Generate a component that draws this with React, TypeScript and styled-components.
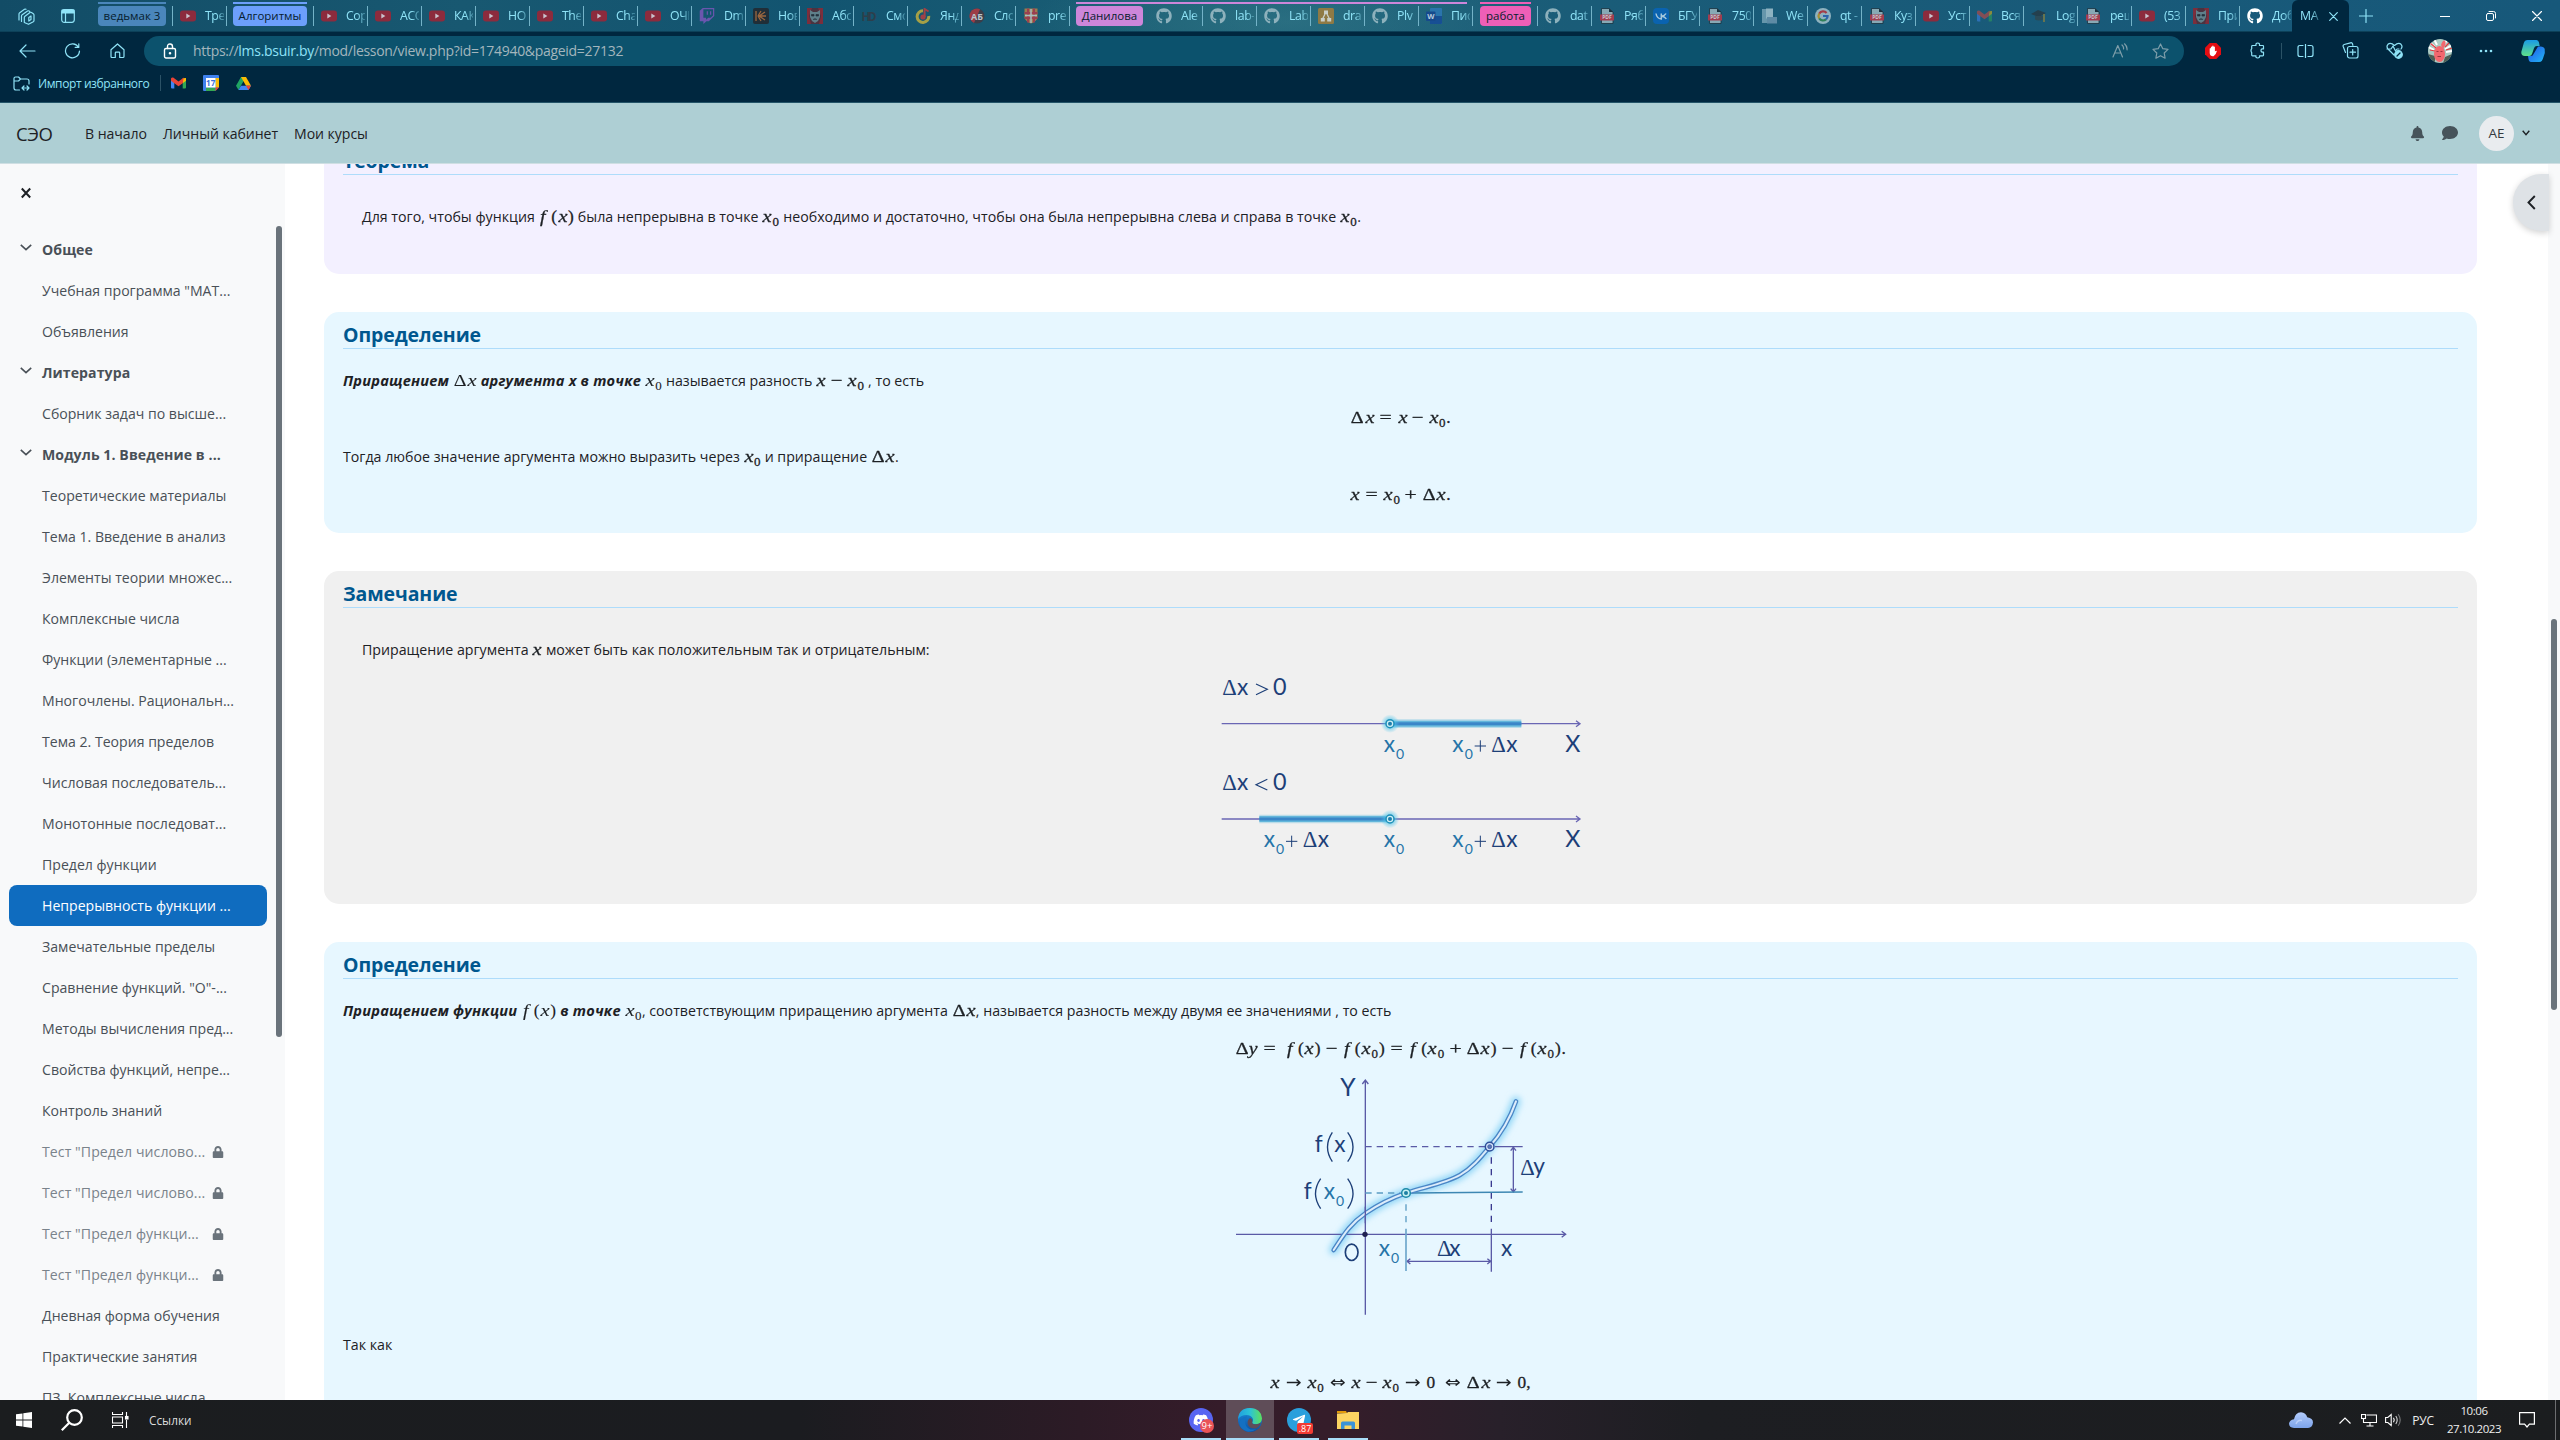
import React from "react";
import styled, { createGlobalStyle, css } from "styled-components";
import { FaGithub, FaBell, FaComment, FaLock, FaTwitch, FaDiscord, FaTelegramPlane } from "react-icons/fa";

const Global = createGlobalStyle`
  * { box-sizing: border-box; }
  html, body { margin: 0; padding: 0; }
  body { width: 2560px; height: 1440px; overflow: hidden; background: #fff; font-family: "Open Sans", "Noto Sans", sans-serif; }
  svg { display: block; flex: none; }
`;

const Screen = styled.div`
  width: 2560px;
  height: 1440px;
  display: flex;
  flex-direction: column;
  overflow: hidden;
`;

/* ---------- browser chrome ---------- */

const TabStrip = styled.div`
  height: 32px;
  flex: none;
  display: flex;
  align-items: stretch;
  padding-left: 10px;
  color: #8fe3f7;
  border-bottom: 1px solid #0d4159;
  background:
    radial-gradient(ellipse 260px 60px at 1290px 22px, rgba(70, 140, 150, 0.35), transparent),
    linear-gradient(90deg, #124c66 0%, #185871 18%, #125470 32%, #1b5f75 46%, #1a5c78 62%, #17587a 100%);
  background-color: #165670;
`;

const StripIcon = styled.div<{ $w: number }>`
  width: ${(p) => p.$w}px;
  display: flex;
  align-items: center;
  justify-content: center;
`;

const Group = styled.div<{ $w: number; $ml: number; $mr: number; $bg: string; $bar: number }>`
  width: ${(p) => p.$w}px;
  height: 20px;
  flex: none;
  margin: 6px ${(p) => p.$mr}px 0 ${(p) => p.$ml}px;
  border-radius: 4px;
  background: ${(p) => p.$bg};
  color: #07202e;
  font-size: 11.5px;
  line-height: 20px;
  text-align: center;
  white-space: nowrap;
  position: relative;
  &::before {
    content: "";
    position: absolute;
    left: 0;
    top: -4px;
    width: ${(p) => p.$bar}px;
    height: 2px;
    background: ${(p) => p.$bg};
  }
`;

const Tab = styled.div<{ $first?: boolean; $last?: boolean }>`
  width: 54px;
  flex: none;
  height: 20px;
  margin-top: 6px;
  padding-left: 7px;
  display: flex;
  align-items: center;
  gap: 9px;
  border-right: 1px solid ${(p) => (p.$last ? "transparent" : "#74b3c8")};
  ${(p) => p.$first && css`box-shadow: -1px 0 0 #74b3c8;`}
`;

const TabText = styled.div`
  width: 19px;
  overflow: hidden;
  white-space: nowrap;
  font-size: 12.3px;
  line-height: 18px;
  letter-spacing: -0.4px;
  mask-image: linear-gradient(90deg, #000 60%, rgba(0, 0, 0, 0.3));
`;

const ActiveTab = styled.div`
  width: 57px;
  height: 32px;
  flex: none;
  margin-left: -2px;
  padding: 0 11px 0 8px;
  display: flex;
  align-items: center;
  justify-content: space-between;
  background: #00273f;
  border-radius: 6px 6px 0 0;
`;

const WindowButtons = styled.div`
  margin-left: auto;
  width: 138px;
  display: flex;
  align-items: center;
  justify-content: space-around;
  color: #fff;
`;

const Toolbar = styled.div`
  height: 37px;
  flex: none;
  display: flex;
  align-items: center;
  background: #00273f;
  color: #8fe3f7;
`;

const ToolBtn = styled.div<{ $w?: number; $color?: string; $ml?: number }>`
  width: ${(p) => p.$w ?? 45}px;
  margin-left: ${(p) => p.$ml ?? 0}px;
  display: flex;
  justify-content: center;
  align-items: center;
  flex: none;
  color: ${(p) => p.$color ?? "inherit"};
`;

const Address = styled.div`
  width: 2040px;
  height: 30px;
  flex: none;
  border-radius: 15px;
  background: #0c526d;
  display: flex;
  align-items: center;
  padding: 0 8px 0 19px;
`;

const Url = styled.div`
  flex: 1;
  padding-left: 16px;
  font-size: 14px;
  letter-spacing: -0.3px;
  color: #a3b6bd;
  b { font-weight: 400; color: #8fe3f7; }
`;

const Divider = styled.div<{ $h?: number }>`
  width: 1px;
  height: ${(p) => p.$h ?? 16}px;
  background: #2b5266;
  flex: none;
`;

const Favorites = styled.div`
  height: 34px;
  flex: none;
  display: flex;
  align-items: center;
  padding: 0 0 5px 13px;
  background: #00273f;
  border-bottom: 1px solid #245468;
  color: #8fe3f7;
  font-size: 12px;
`;

const FavLabel = styled.div`
  width: 112px;
  margin: 0 10px 0 8px;
  white-space: nowrap;
  letter-spacing: -0.4px;
`;

const FavIcons = styled.div`
  display: flex;
  align-items: center;
  gap: 17px;
  margin-left: 10px;
`;

/* ---------- site header ---------- */

const SiteHeader = styled.header`
  height: 61px;
  flex: none;
  display: flex;
  align-items: center;
  padding: 0 30px 0 16px;
  background: #aecfd4;
  border-bottom: 1px solid #cfdfe3;
  color: #1d2125;
`;

const Brand = styled.div`
  width: 69px;
  font-size: 18.5px;
  letter-spacing: -0.4px;
`;

const NavLink = styled.div<{ $w: number }>`
  width: ${(p) => p.$w}px;
  font-size: 14.1px;
  letter-spacing: -0.05px;
  white-space: nowrap;
`;

const HeaderTools = styled.div`
  margin-left: auto;
  display: flex;
  align-items: center;
  gap: 17px;
  color: #46535a;
`;

const Avatar = styled.div`
  width: 35px;
  height: 35px;
  margin: 0 -9px 0 4px;
  border-radius: 50%;
  background: #e9ecef;
  color: #343a40;
  font-size: 13.5px;
  line-height: 35px;
  text-align: center;
`;

/* ---------- page body ---------- */

const Body = styled.div`
  flex: 1;
  min-height: 0;
  display: flex;
  overflow: hidden;
  position: relative;
`;

const Sidebar = styled.aside`
  width: 285px;
  flex: none;
  display: flex;
  flex-direction: column;
  background: #f8f9fa;
  overflow: hidden;
`;

const SidebarTop = styled.div`
  height: 62px;
  flex: none;
  padding: 23px 0 0 21px;
`;

const SidebarScroll = styled.div`
  display: flex;
  justify-content: space-between;
  padding-right: 3px;
`;

const IndexList = styled.div`
  width: 258px;
  margin: 3px 0 0 9px;
`;

const IndexRow = styled.div<{ $kind?: string }>`
  height: 41px;
  display: flex;
  align-items: center;
  border-radius: 8px;
  padding-left: 8px;
  white-space: nowrap;
  font-size: 14.1px;
  letter-spacing: 0;
  color: #495057;
  ${(p) => p.$kind === "head" && css`font-weight: 700; letter-spacing: 0.08px;`}
  ${(p) => p.$kind === "active" && css`background: #0f6cbf; color: #fff;`}
  ${(p) => p.$kind === "lock" && css`color: #7a838b; letter-spacing: 0.08px;`}
`;

const Caret = styled.div`
  width: 25px;
  padding: 0 0 4px 3px;
  flex: none;
`;

const RowText = styled.div<{ $w?: number }>`
  ${(p) => p.$w && css`width: ${p.$w}px;`}
`;

const SideThumb = styled.div`
  width: 6px;
  height: 811px;
  border-radius: 3px;
  background: #6a737b;
`;

const Main = styled.main`
  flex: 1;
  min-width: 0;
  display: flex;
  flex-direction: column;
  margin-top: -26px;
  padding: 0 71px 0 39px;
  overflow: hidden;
`;

const PageScroll = styled.div`
  width: 12px;
  flex: none;
  background: #f8f9fa;
  padding: 455px 3px 0;
`;

const PageThumb = styled.div`
  width: 6px;
  height: 391px;
  border-radius: 3px;
  background: #6a737b;
`;

const DrawerToggle = styled.div`
  position: absolute;
  right: 11px;
  top: 10px;
  width: 36px;
  height: 57px;
  border-radius: 28px 0 0 28px;
  background: #dee2e6;
  box-shadow: 0 2px 6px rgba(0, 0, 0, 0.18);
  display: flex;
  align-items: center;
  justify-content: center;
`;

const Card = styled.section<{ $bg: string; $h: number; $mb: number }>`
  height: ${(p) => p.$h}px;
  margin-bottom: ${(p) => p.$mb}px;
  flex: none;
  padding: 0 19px;
  border-radius: 15px;
  background: ${(p) => p.$bg};
  color: #1d2125;
  display: flex;
  flex-direction: column;
`;

const Title = styled.h4`
  margin: 0;
  height: 37px;
  flex: none;
  padding-top: 10px;
  font-size: 19.5px;
  line-height: 26px;
  font-weight: 700;
  letter-spacing: -0.1px;
  color: #00578f;
  border-bottom: 1px solid #aedcfb;
`;

const Para = styled.p<{ $mt: number; $indent?: boolean; $center?: boolean }>`
  margin: ${(p) => p.$mt}px 0 0;
  height: 24px;
  flex: none;
  line-height: 24px;
  font-size: 14.2px;
  letter-spacing: 0;
  white-space: nowrap;
  padding-left: ${(p) => (p.$indent ? 19 : 0)}px;
  text-align: ${(p) => (p.$center ? "center" : "left")};
`;

const Em = styled.b`
  font-style: italic;
  font-weight: 700;
  font-size: 14.6px;
  letter-spacing: 0.2px;
`;

const Figure = styled.div<{ $mt: number }>`
  margin-top: ${(p) => p.$mt}px;
  display: flex;
  justify-content: center;
`;

/* ---------- formulas ---------- */

const MathRun = styled.span<{ $bold?: boolean }>`
  font-family: "Liberation Serif", "Times New Roman", serif;
  font-size: 17.3px;
  letter-spacing: 0;
  line-height: 20px;
  -webkit-text-stroke: ${(p) => (p.$bold ? 0.3 : 0.1)}px currentColor;
`;

const Atom = styled.span<{ $w: number; $it?: boolean; $sx?: number; $m?: number; $sub?: boolean; $arrow?: boolean }>`
  display: inline-block;
  width: ${(p) => p.$w}em;
  margin: 0 ${(p) => p.$m ?? 0}em;
  text-align: center;
  line-height: 1;
  font-style: ${(p) => (p.$it ? "italic" : "normal")};
  transform: scaleX(${(p) => p.$sx ?? 1});
  ${(p) => p.$sub && css`font-size: 0.75em; vertical-align: -0.28em;`}
  ${(p) => p.$arrow && css`font-family: "DejaVu Sans", sans-serif; -webkit-text-stroke: 0;`}
`;

type Glyph = { c: string; w: number; it?: boolean; sx?: number; m?: number; sub?: boolean; arrow?: boolean };
const glyphs: Record<string, Glyph> = {
  x: { c: "x", w: 0.572, it: true, sx: 1.18 },
  y: { c: "y", w: 0.49, it: true, sx: 1.15 },
  f: { c: "f", w: 0.55, it: true, sx: 1.15 },
  D: { c: "Δ", w: 0.833, sx: 1.15 },
  "(": { c: "(", w: 0.389 },
  ")": { c: ")", w: 0.389 },
  "0": { c: "0", w: 0.5 },
  _0: { c: "0", w: 0.58, sub: true },
  "=": { c: "=", w: 0.778, m: 0.278, sx: 1.25 },
  "-": { c: "−", w: 0.778, m: 0.222, sx: 1.2 },
  "+": { c: "+", w: 0.778, m: 0.222, sx: 1.25 },
  ">": { c: "→", w: 1, m: 0.278, sx: 1.1, arrow: true },
  "<>": { c: "⇔", w: 1, m: 0.278, sx: 1.1, arrow: true },
  ".": { c: ".", w: 0.278 },
  ",": { c: ",", w: 0.278 },
  "~": { c: "", w: 0.167 },
  "~~": { c: "", w: 0.25 },
};

const M = ({ t, bold }: { t: string; bold?: boolean }) => (
  <MathRun $bold={bold}>
    {t.split(" ").map((k, i) => {
      const g = glyphs[k];
      return (
        <Atom key={i} $w={g.w} $it={g.it} $sx={g.sx} $m={g.m} $sub={g.sub} $arrow={g.arrow}>
          {g.c}
        </Atom>
      );
    })}
  </MathRun>
);

/* ---------- small icons ---------- */

const line = { fill: "none", stroke: "currentColor", strokeWidth: 1.2, strokeLinecap: "round" as const, strokeLinejoin: "round" as const };

const Yt = () => (
  <svg width="16" height="16" viewBox="0 0 16 16">
    <rect x="0" y="2.500" width="16" height="11" rx="3" fill="#8c2b3d" />
    <path d="M6.300 5.600v4.800L10.400 8z" fill="#c9c3cc" />
  </svg>
);
const Gh = ({ on }: { on?: boolean }) => <FaGithub size={16} color={on ? "#fff" : "#8db1bc"} />;
const Pdf = () => (
  <svg width="16" height="16" viewBox="0 0 16 16">
    <path d="M2.500 .5h7.500l4 3.500v11.500h-11.500z" fill="#87a9b5" stroke="#17303d" strokeWidth=".8" />
    <path d="M10 .5v3.500h4z" fill="#17303d" />
    <rect x="1" y="6.500" width="14" height="6" fill="#a23d50" />
    <text x="8" y="11.300" fontSize="5" fontWeight="700" textAnchor="middle" fill="#c9ccd4">PDF</text>
  </svg>
);
const GmailIcon = ({ o = 1 }: { o?: number }) => (
  <svg width="15" height="12" viewBox="0 0 15 12" opacity={o}>
    <path d="M0 1.500V10.500q0 1 1 1H3.300V5z" fill="#4285f4" />
    <path d="M15 1.500V10.500q0 1-1 1H11.700V5z" fill="#34a853" />
    <path d="M11.700 1.300L15 1v2.700l-3.300 2.500z" fill="#fbbc04" />
    <path d="M0 1.500Q.6 0 2.200.5L7.500 4.500 12.800.5l-1.100 5.700L7.500 9.300 3.300 6.200 0 3.700z" fill="#ea4335" />
  </svg>
);
const Face = () => (
  <svg width="16" height="16" viewBox="0 0 16 16">
    <rect width="16" height="16" fill="#4a3340" />
    <path d="M0 0h5L2 8l2 8H0zM16 0h-5l3 8-2 8h4z" fill="#7c2e3c" />
    <path d="M3 2l3 2h4l3-2v7l-2 4-3 2-3-2-2-4z" fill="#5f7f8a" />
    <path d="M4.500 6.500h2.500v1.500h-2.500zM9 6.500h2.500v1.500H9zM6 11.500q2-1.500 4 0" fill="#24313d" stroke="#24313d" strokeWidth=".7" />
  </svg>
);

const favicons: Record<string, React.ReactNode> = {
  yt: <Yt />,
  gh: <Gh />,
  ghOn: <Gh on />,
  pdf: <Pdf />,
  gmail: <GmailIcon o={0.5} />,
  face: <Face />,
  twitch: <FaTwitch size={16} color="#6a56ae" />,
  kc: (
    <svg width="16" height="16" viewBox="0 0 16 16">
      <rect width="16" height="16" rx="2" fill="#202e38" />
      <path d="M3 3v10M6 8h7M6 8l6-4M6 8l6 4M5 8l3-5M5 8l3 5" stroke="#9b673f" strokeWidth="1.300" />
    </svg>
  ),
  hd: (
    <svg width="16" height="16" viewBox="0 0 16 16">
      <text x="8" y="12.500" fontSize="11.500" fontWeight="700" textAnchor="middle" textLength="15" fill="#2d3f4b">HD</text>
    </svg>
  ),
  music: (
    <svg width="16" height="16" viewBox="0 0 16 16">
      <path d="M8 2.800A5.800 5.800 0 1 0 13.700 8" fill="none" stroke="#a5a046" strokeWidth="3" />
      <circle cx="8" cy="9" r="2.600" fill="#a04146" />
      <path d="M9.600 9V1l4 2.500" stroke="#a04146" strokeWidth="2" fill="none" />
    </svg>
  ),
  ab: (
    <svg width="16" height="16" viewBox="0 0 16 16">
      <circle cx="8" cy="8" r="7.500" fill="#3c3e4a" />
      <path d="M11 1.200A7.500 7.500 0 1 0 5 15z" fill="#9d3c46" />
      <text x="8" y="11.500" fontSize="9" fontWeight="700" textAnchor="middle" fill="#b8c3ca">AБ</text>
    </svg>
  ),
  shield: (
    <svg width="16" height="16" viewBox="0 0 16 16">
      <path d="M1.500.5h13v9q-1 4-6.500 6-5.500-2-6.500-6z" fill="#9e7a4e" />
      <path d="M5 .5v14M11 .5v14M1.500 5h13M1.500 10h13" stroke="#9b4050" strokeWidth="2" />
      <path d="M8 1v14M2 7.500h12" stroke="#a8bcc0" strokeWidth="1.500" />
    </svg>
  ),
  drawio: (
    <svg width="16" height="16" viewBox="0 0 16 16">
      <rect width="16" height="16" rx="1.500" fill="#8f7a45" />
      <path d="M8 4L4.500 11M8 4l3.500 7" stroke="#c9cfc9" strokeWidth="1.300" />
      <path d="M6 2.500h4v3.500H6zM2.800 10h4v3.500h-4zM9.200 10h4v3.500h-4z" fill="#c9cfc9" />
    </svg>
  ),
  word: (
    <svg width="16" height="16" viewBox="0 0 16 16">
      <rect x="4" y="0" width="12" height="16" rx="1" fill="#2a74ac" />
      <path d="M4 8h12v7q0 1-1 1H4z" fill="#174f94" />
      <rect x="0" y="3.500" width="9.500" height="9.500" rx="1" fill="#164a8c" />
      <text x="4.800" y="11" fontSize="7.500" fontWeight="700" textAnchor="middle" fill="#b5cbdc">W</text>
    </svg>
  ),
  vk: (
    <svg width="16" height="16" viewBox="0 0 16 16">
      <rect width="16" height="16" rx="4" fill="#0a63b0" />
      <path d="M3 5.500q.8 5 5.300 5.500V5.500M13 5.500Q11.800 7.800 8.500 8.200 12 8.700 13.300 11" fill="none" stroke="#a5c8dd" strokeWidth="1.500" />
    </svg>
  ),
  doc: (
    <svg width="16" height="16" viewBox="0 0 16 16">
      <path d="M1 1h8v14H1z" fill="#6696ab" />
      <path d="M5 .5h7v10H5z" fill="#8db2c1" />
      <path d="M6 9h10v6.500H6z" fill="#5e8ba5" />
    </svg>
  ),
  google: (
    <svg width="16" height="16" viewBox="0 0 16 16">
      <circle cx="8" cy="8" r="8" fill="#8fb2bf" />
      <g fill="none" strokeWidth="2.200">
        <path d="M11.600 5A4.600 4.600 0 0 0 4.200 5.600" stroke="#a33d48" />
        <path d="M4.200 5.600a4.600 4.600 0 0 0 0 4.800" stroke="#a58f35" />
        <path d="M4.200 10.400a4.600 4.600 0 0 0 6.800 1" stroke="#2f8159" />
        <path d="M8 8h4.600a4.600 4.600 0 0 1-1.600 3.400" stroke="#2b65ac" />
      </g>
    </svg>
  ),
  log: (
    <svg width="16" height="16" viewBox="0 0 16 16">
      <path d="M0 6l7-4 8 3-7 4z" fill="#24404e" />
      <path d="M4 8v3.500q4 2 8 0V8" fill="#2b4b58" />
      <path d="M13 6v8" stroke="#89803f" strokeWidth="1.400" />
    </svg>
  ),
};

type TabItem = [string, string];
const tabsA: TabItem[] = [["yt", "Тре"]];
const tabsB: TabItem[] = [
  ["yt", "Сор"], ["yt", "АСО"], ["yt", "КАК"], ["yt", "НО"], ["yt", "The"], ["yt", "Cha"], ["yt", "ОЧІ"],
  ["twitch", "Dm"], ["kc", "Нов"], ["face", "Абс"], ["hd", "Смо"], ["music", "Янд"], ["ab", "Сло"], ["shield", "pre"],
];
const tabsC: TabItem[] = [["gh", "Ale"], ["gh", "lab-"], ["gh", "Lab"], ["drawio", "dra"], ["gh", "Plv"], ["word", "Пис"]];
const tabsD: TabItem[] = [
  ["gh", "dat"], ["pdf", "Ряб"], ["vk", "БГУ"], ["pdf", "750"], ["doc", "We"], ["google", "qt -"], ["pdf", "Куз"],
  ["yt", "Уст"], ["gmail", "Вся"], ["log", "Log"], ["pdf", "реш"], ["yt", "(53"], ["face", "При"], ["ghOn", "Доб"],
];

const Tabs = ({ items, first, noLast }: { items: TabItem[]; first?: boolean; noLast?: boolean }) => (
  <>
    {items.map(([k, t], i) => (
      <Tab key={i} $first={first && i === 0} $last={noLast && i === items.length - 1}>
        {favicons[k]}
        <TabText>{t}</TabText>
      </Tab>
    ))}
  </>
);

const Chrome = () => (
  <>
    <TabStrip>
      <StripIcon $w={32}>
        <svg width="17" height="18" viewBox="0 0 17 18" {...line}>
          <path d="M1 13V7q0-.8.700-1.300L6.500 2.300q.7-.5 1.500 0M3.500 14.500V9q0-.8.7-1.300L9.500 4q.7-.5 1.500 0l.8.5" />
          <path d="M6.300 15.500v-5q0-.8.7-1.300l5-3.700q.7-.5 1.500 0l1.800 1.200q.7.500.7 1.300v5.500q0 .8-.7 1.200L10.500 17.300z" />
          <path d="M10.800 10.500l2.200-1.500v3.500l-2.200 1.500z" />
        </svg>
      </StripIcon>
      <StripIcon $w={52}>
        <svg width="14" height="14" viewBox="0 0 14 14" {...line}>
          <rect x=".7" y=".7" width="12.600" height="12.600" rx="2.500" />
          <path d="M1 1h12v3H1z" fill="currentColor" />
          <path d="M4.500 4v9" />
        </svg>
      </StripIcon>
      <Group $w={68} $ml={4} $mr={7} $bg="#4a86bb" $bar={68}>ведьмак 3</Group>
      <Tabs items={tabsA} first />
      <Group $w={74} $ml={6} $mr={7} $bg="#6c9ffb" $bar={74}>Алгоритмы</Group>
      <Tabs items={tabsB} first />
      <Group $w={67} $ml={6} $mr={6} $bg="#cd86da" $bar={391}>Данилова</Group>
      <Tabs items={tabsC} />
      <Group $w={51} $ml={7} $mr={7} $bg="#ee5fb7" $bar={51}>работа</Group>
      <Tabs items={tabsD} first noLast />
      <ActiveTab>
        <TabText>МА</TabText>
        <svg width="9" height="9" viewBox="0 0 9 9" {...line}><path d="M.7.7l7.600 7.600M8.300.7L.7 8.300" /></svg>
      </ActiveTab>
      <StripIcon $w={34}>
        <svg width="14" height="14" viewBox="0 0 14 14" {...line}><path d="M7 .5v13M.5 7h13" /></svg>
      </StripIcon>
      <WindowButtons>
        <svg width="10" height="10" viewBox="0 0 10 10" {...line}><path d="M.5 5.500h9" /></svg>
        <svg width="10" height="10" viewBox="0 0 10 10" {...line} strokeWidth={1}>
          <rect x=".5" y="2.500" width="7" height="7" rx="1.500" /><path d="M3 .5h4.500q2 0 2 2V7" />
        </svg>
        <svg width="10" height="10" viewBox="0 0 10 10" {...line}><path d="M.5.5l9 9M9.500.5l-9 9" /></svg>
      </WindowButtons>
    </TabStrip>
    <Toolbar>
      <ToolBtn $w={54}>
        <svg width="17" height="14" viewBox="0 0 17 14" {...line}><path d="M16 7H1M7 1L1 7l6 6" /></svg>
      </ToolBtn>
      <ToolBtn $w={36}>
        <svg width="17" height="16" viewBox="0 0 17 16" {...line}><path d="M14.500 4.200A7 7 0 1 0 15.500 8M14.800.8v3.600h-3.600" /></svg>
      </ToolBtn>
      <ToolBtn $w={54}>
        <svg width="15" height="16" viewBox="0 0 15 16" {...line}><path d="M1 6.800L7.500 1 14 6.800V13.500q0 1-1 1H9.700V10q0-.8-.8-.8H6.100q-.8 0-.8.8v4.500H2q-1 0-1-1z" /></svg>
      </ToolBtn>
      <Address>
        <svg width="14" height="16" viewBox="0 0 14 16" {...line} stroke="#fff" strokeWidth={1.4}>
          <rect x="1.500" y="5.500" width="11" height="9.500" rx="1.500" /><path d="M4.500 5.500V3.500q0-2.500 2.500-2.500t2.500 2.500v2" /><circle cx="7" cy="10.200" r=".6" fill="#fff" />
        </svg>
        <Url>https://<b>lms.bsuir.by</b>/mod/lesson/view.php?id=174940&amp;pageid=27132</Url>
        <ToolBtn $w={24} $color="#7e9eaa">
          <svg width="16" height="15" viewBox="0 0 16 15" {...line}><path d="M1 14L5.800 2.500 10.500 14M2.700 10h6.200M10 2q2 1.800 1.500 4M12.500.8q3 2.700 2.500 6" /></svg>
        </ToolBtn>
        <ToolBtn $w={32} $ml={12} $color="#7e9eaa">
          <svg width="17" height="16" viewBox="0 0 17 16" {...line}><path d="M8.500 1l2.300 4.700 5.200.7-3.800 3.600.9 5.200-4.600-2.500-4.600 2.500.9-5.200L1 6.400l5.200-.7z" /></svg>
        </ToolBtn>
      </Address>
      <ToolBtn $w={57}>
        <svg width="16" height="16" viewBox="0 0 16 16">
          <path d="M4.700 0h6.600L16 4.700v6.600L11.300 16H4.700L0 11.300V4.700z" fill="#e40d12" />
          <path d="M4.700 5.500q.8-1 1.200 0V4q.7-1 1.300 0V3q.8-1 1.400 0v1q.7-1 1.300 0v4.500q1-1.300 2-.5-.9 4-3.400 5.300-3.500.3-3.800-3.300z" fill="#fff" />
        </svg>
      </ToolBtn>
      <ToolBtn $w={32}>
        <svg width="15" height="17" viewBox="0 0 15 17" {...line}><path d="M2.500 3.500H6Q5.500 1 7.700 1t1.800 2.500h3.300q.7 0 .7.700V7Q11 6.500 11 8.500t2.500 1.500v3q0 .8-.7.800H9.500Q10 16 7.700 16T6 13.800H2.500q-.8 0-.8-.8v-2.500Q1 10 1 8.500T1.700 6.800V4.300q0-.8.8-.8z" /></svg>
      </ToolBtn>
      <ToolBtn $w={16}><Divider $h={16} /></ToolBtn>
      <ToolBtn $w={33}>
        <svg width="17" height="14" viewBox="0 0 17 14" {...line}><path d="M8.500 0v14M6 1.500H3q-2 0-2 2v7q0 2 2 2h3M11 1.500h3q2 0 2 2v7q0 2-2 2h-3" /></svg>
      </ToolBtn>
      <ToolBtn $w={56}>
        <svg width="17" height="17" viewBox="0 0 17 17" {...line}><path d="M3.500 10.500L1.200 4.500q-.5-1.500 1-2L8.500.8q1.500-.4 2 1l.4 1.500" /><rect x="5.500" y="4.500" width="10.500" height="11.500" rx="2" /><path d="M10.700 7.500v5.500M8 10.200h5.500" /></svg>
      </ToolBtn>
      <ToolBtn $w={32}>
        <svg width="17" height="17" viewBox="0 0 17 17" {...line}>
          <path d="M8 13L2 7Q0 4.500 2 2.300 4.500 0 8.500 3.500 12.500 0 15 2.300 17 4.500 15 7M1 7h4l2-3 2.500 5L11 7h2" /><circle cx="12.500" cy="12.500" r="3.800" fill="currentColor" /><path d="M11 14l3-3" stroke="#00273f" />
        </svg>
      </ToolBtn>
      <ToolBtn $w={60}>
        <svg width="24" height="24" viewBox="0 0 24 24">
          <defs><clipPath id="av"><circle cx="12" cy="12" r="12" /></clipPath></defs>
          <g clipPath="url(#av)">
            <rect width="24" height="24" fill="#a9c9c2" />
            <path d="M0 2l7 6M0 8l6 3M6 0l3 6M20 0l-5 6M24 6l-7 4M24 12l-6 1" stroke="#fff" strokeWidth="2" />
            <path d="M2 4l6 5M2 11l5 1M22 3l-5 5M24 9l-6 2" stroke="#e3393f" strokeWidth="1.200" />
            <path d="M0 15l7 2v7H0zM24 15l-7 3-2 6h9z" fill="#4d5f56" />
            <ellipse cx="11.500" cy="15" rx="5.500" ry="8" fill="#f2676e" />
            <path d="M13 6q2-6 4-4t-2 8z" fill="#f2676e" />
            <path d="M8.500 12.500h2M12.500 12.500h2M9.500 17.500h3.500" stroke="#9c3540" />
          </g>
        </svg>
      </ToolBtn>
      <ToolBtn $w={32}>
        <svg width="14" height="4" viewBox="0 0 14 4" fill="currentColor"><circle cx="2" cy="2" r="1.300" /><circle cx="7" cy="2" r="1.300" /><circle cx="12" cy="2" r="1.300" /></svg>
      </ToolBtn>
      <ToolBtn $w={62}>
        <svg width="24" height="22" viewBox="0 0 24 22">
          <defs>
            <linearGradient id="cpA" x1="0" y1="0" x2="0" y2="1"><stop offset="0" stopColor="#1a9ae6" /><stop offset="1" stopColor="#5fe08a" /></linearGradient>
            <linearGradient id="cpB" x1="0" y1="0" x2="1" y2="1"><stop offset="0" stopColor="#2452e8" /><stop offset="1" stopColor="#21b8f5" /></linearGradient>
          </defs>
          <path d="M17 6.500h2.500Q23 6.500 23.700 9l.1 4-2 6q-.8 3-3.800 3h-8Q8 22 7.500 19l-.5-3h3q2 0 2.700-2.200z" fill="url(#cpB)" />
          <path d="M6.500 0h9Q17.500 0 18 2.500L18.700 6h-3q-2 0-2.700 2.200L11 14q-.7 2-2.700 2H4Q0 16 .3 12L2.800 3Q3.700 0 6.500 0z" fill="url(#cpA)" />
        </svg>
      </ToolBtn>
    </Toolbar>
    <Favorites>
      <svg width="17" height="15" viewBox="0 0 17 15" {...line}>
        <path d="M6.500 14H3q-2 0-2-2V2.500Q1 1 2.500 1h3L7.500 3H14q2 0 2 2v3M1 5h4.500l2-2M9 12h7M11 10l-2 2 2 2M14 10l2 2-2 2" />
      </svg>
      <FavLabel>Импорт избранного</FavLabel>
      <Divider />
      <FavIcons>
        <GmailIcon />
        <svg width="16" height="16" viewBox="0 0 16 16">
          <path d="M1 0h14q1 0 1 1v11l-4 4H1q-1 0-1-1V1q0-1 1-1z" fill="#3f82ee" />
          <path d="M12.500 3H16v9.500h-3.500z" fill="#fbbc04" /><path d="M3 12.500h9.500V16H3z" fill="#34a853" /><path d="M12.500 12.500H16L12.500 16z" fill="#ea4335" />
          <path d="M3 3h9.500v9.500H3z" fill="#fff" />
          <text x="7.700" y="11" fontSize="8" fontWeight="700" textAnchor="middle" fill="#3a72d8">17</text>
        </svg>
        <svg width="15" height="13" viewBox="0 0 15 13">
          <path d="M5 0h5L5 8.500 2.500 13 0 8.700z" fill="#1fa463" /><path d="M5 0h5l5 8.700h-5z" fill="#fbbc04" /><path d="M5 8.700h10L12.500 13h-10z" fill="#4285f4" /><path d="M10 8.700h5L12.500 13z" fill="#ea4335" />
        </svg>
      </FavIcons>
    </Favorites>
  </>
);

/* ---------- sidebar data ---------- */

const rows: { t: string; k?: string }[] = [
  { t: "Общее", k: "head" },
  { t: "Учебная программа \"МАТ..." },
  { t: "Объявления" },
  { t: "Литература", k: "head" },
  { t: "Сборник задач по высше..." },
  { t: "Модуль 1. Введение в ...", k: "head" },
  { t: "Теоретические материалы" },
  { t: "Тема 1. Введение в анализ" },
  { t: "Элементы теории множес..." },
  { t: "Комплексные числа" },
  { t: "Функции (элементарные ..." },
  { t: "Многочлены. Рациональн..." },
  { t: "Тема 2. Теория пределов" },
  { t: "Числовая последователь..." },
  { t: "Монотонные последоват..." },
  { t: "Предел функции" },
  { t: "Непрерывность функции ...", k: "active" },
  { t: "Замечательные пределы" },
  { t: "Сравнение функций. \"О\"-..." },
  { t: "Методы вычисления пред..." },
  { t: "Свойства функций, непре..." },
  { t: "Контроль знаний" },
  { t: "Тест \"Предел числово...", k: "lock" },
  { t: "Тест \"Предел числово...", k: "lock" },
  { t: "Тест \"Предел функци...", k: "lock" },
  { t: "Тест \"Предел функци...", k: "lock" },
  { t: "Дневная форма обучения" },
  { t: "Практические занятия" },
  { t: "ПЗ. Комплексные числа" },
];

/* ---------- figures ---------- */

const navy = "#1d3f78";
const teal = "#2674a8";
const axis = "#5a5aa6";

const FigText = styled.text<{ $s: number; $c?: string }>`
  font-family: Lato, sans-serif;
  font-size: ${(p) => p.$s}px;
  fill: ${(p) => p.$c ?? navy};
`;

const Delta = styled.text`
  font-family: "Liberation Serif", serif;
  font-size: 68px;
  fill: ${navy};
`;

const X0 = ({ x, y }: { x: number; y: number }) => (
  <>
    <FigText $s={68} $c={teal} x={x - 1} y={y}>x</FigText>
    <FigText $s={42} $c={teal} x={x + 36} y={y + 21}>0</FigText>
  </>
);
const X0D = ({ x, y }: { x: number; y: number }) => (
  <>
    <X0 x={x} y={y} />
    <path d={`M${x + 66} ${y - 17}h34M${x + 83} ${y - 34}v34`} stroke={navy} strokeWidth="3" />
    <Delta x={x + 116} y={y}>Δ</Delta>
    <FigText $s={68} x={x + 161} y={y}>x</FigText>
  </>
);

const AxisRow = ({ y, from, to, sign }: { y: number; from: number; to: number; sign: string }) => (
  <>
    <Delta x={127} y={y - 86}>Δ</Delta>
    <FigText $s={68} x={171} y={y - 86}>x</FigText>
    <path d={sign} transform={`translate(226 ${y - 131})`} fill="none" stroke={navy} strokeWidth="3.5" />
    <FigText $s={70} x={279} y={y - 86}>0</FigText>
    <path d={`M125 ${y}H1198M1188 ${y - 9}l12 9-12 9`} fill="none" stroke="#6a66b4" strokeWidth="4" />
    <path d={`M${from} ${y}H${to}`} stroke="#3fb0da" strokeWidth="26" opacity=".3" />
    <path d={`M${from} ${y}H${to}`} stroke="#3fa6d6" strokeWidth="18" opacity=".7" />
    <path d={`M${from} ${y}H${to}`} stroke="#3b86c8" strokeWidth="9" />
    <circle cx="630" cy={y} r="28" fill="url(#glow)" />
    <circle cx="630" cy={y} r="12" fill="#cfeff5" stroke="#1d8fb8" strokeWidth="4.500" />
    <circle cx="630" cy={y} r="6" fill="#1b7fae" />
    <X0 x={612} y={y + 84} />
    <X0D x={818} y={y + 84} />
    <FigText $s={70} x={1156} y={y + 84}>X</FigText>
  </>
);

const NumberLines = () => (
  <svg width="440" height="200" viewBox="3 90 1320 600">
    <defs>
      <radialGradient id="glow"><stop offset=".4" stopColor="#4cc4ea" stopOpacity=".7" /><stop offset="1" stopColor="#4cc4ea" stopOpacity="0" /></radialGradient>
    </defs>
    <AxisRow y={251} from={640} to={1024} sign="M2 12l34 16-34 16" />
    <AxisRow y={537} from={238} to={620} sign="M36 12L2 28l34 16" />
    <X0D x={252} y={621} />
  </svg>
);

const curve = "M401 690C425 655 445 615 496 580C540 550 580 532 618 519C690 497 740 488 780 465C815 445 840 415 869 380C900 345 930 295 948 244";

const Graph = () => (
  <svg width="400" height="255" viewBox="3 150 1200 765">
    <defs><filter id="soft" x="-20%" y="-20%" width="140%" height="140%"><feGaussianBlur stdDeviation="10" /></filter></defs>
    <path d={curve} fill="none" stroke="#8fd5f6" strokeWidth="28" strokeLinecap="round" filter="url(#soft)" />
    <g fill="none" stroke={axis} strokeWidth="4">
      <path d="M108 643H1096M1085 634l12 9-12 9M496 884V180M487 192l9-12 9 12" />
      <path d="M496 380H855" strokeDasharray="19 15" />
      <path d="M874 412V620" stroke="#3a3a90" strokeDasharray="19 16" />
      <path d="M874 626V755M885 380H968M940 384v130M932 392l8-10 8 10M932 506l8 10 8-10M622 724H870M631 716l-10 8 10 8M862 716l10 8-10 8" />
      <path d="M496 519H600" stroke="#5b9cc4" strokeDasharray="19 15" />
      <path d="M618 553V620" stroke="#5b9cc4" strokeDasharray="19 16" />
      <path d="M618 626V753" stroke="#6da6cc" strokeWidth="5" />
      <path d="M634 519L968 516" stroke="#3d87b3" />
    </g>
    <path d={curve} fill="none" stroke="#4a86c6" strokeWidth="14" strokeLinecap="round" />
    <path d={curve} fill="none" stroke="#dcecfb" strokeWidth="6" strokeLinecap="round" />
    <path d="M496 560V610" stroke={axis} strokeWidth="4" />
    <circle cx="618" cy="519" r="13" fill="#c6f0f2" stroke="#1d8aa8" strokeWidth="4.500" />
    <circle cx="618" cy="519" r="6" fill="#1d7fa3" />
    <circle cx="869" cy="380" r="13" fill="#d5e4fa" stroke="#2d4f9a" strokeWidth="4.500" />
    <circle cx="869" cy="380" r="6" fill="#5c78b8" stroke="#2d4f9a" strokeWidth="2" />
    <circle cx="495" cy="643" r="8" fill="#1f2050" />
    <FigText $s={74} x={421} y={229}>Y</FigText>
    <FigText $s={68} x={344} y={397}>f</FigText>
    <FigText $s={68} x={403} y={397}>x</FigText>
    <FigText $s={68} x={311} y={537}>f</FigText>
    <X0 x={372} y={536} />
    <g fill="none" stroke={navy} strokeWidth="4">
      <path d="M397 337q-29 44 0 88M443 337q32 44 0 88M362 476q-31 45 0 90M443 476q32 45 0 90" />
    </g>
    <ellipse cx="455" cy="697" rx="19" ry="24.500" fill="none" stroke={navy} strokeWidth="5" />
    <X0 x={537} y={709} />
    <Delta x={711} y={707}>Δ</Delta>
    <FigText $s={68} x={748} y={707}>x</FigText>
    <FigText $s={68} x={903} y={708}>x</FigText>
    <Delta x={961} y={465}>Δ</Delta>
    <FigText $s={68} x={1000} y={463}>y</FigText>
  </svg>
);

/* ---------- taskbar ---------- */

const Taskbar = styled.footer`
  height: 40px;
  flex: none;
  display: flex;
  align-items: stretch;
  color: #fff;
  background: linear-gradient(90deg, #1b1d1f 0, #1b1c20 800px, #2c1b26 1080px, #351c2a 1220px, #351d2a 1340px, #28202a 1500px, #1d1e22 1700px, #1b1d1f 100%);
`;

const StartArea = styled.div`
  width: 1181px;
  display: flex;
  align-items: center;
  padding-left: 16px;
  font-size: 11.8px;
  color: #dcdcdc;
`;

const StartIcon = styled.div<{ $mr: number }>`
  margin-right: ${(p) => p.$mr}px;
`;

const Apps = styled.div`
  display: flex;
`;

const AppButton = styled.div<{ $w: number; $mr: number; $on?: boolean }>`
  width: ${(p) => p.$w}px;
  margin-right: ${(p) => p.$mr}px;
  display: flex;
  align-items: center;
  justify-content: center;
  border-bottom: 2px solid #a9ddf8;
  padding-top: 2px;
  background: ${(p) => (p.$on ? "#5f4d58" : "transparent")};
  position: relative;
`;

const Disc = styled.div<{ $bg: string }>`
  width: 24px;
  height: 24px;
  border-radius: 50%;
  background: ${(p) => p.$bg};
  display: flex;
  align-items: center;
  justify-content: center;
`;

const Badge = styled.span<{ $sq?: boolean }>`
  position: absolute;
  left: ${(p) => (p.$sq ? 18 : 19)}px;
  top: ${(p) => (p.$sq ? 23 : 19)}px;
  width: ${(p) => (p.$sq ? 16 : 14)}px;
  height: ${(p) => (p.$sq ? 11 : 14)}px;
  border-radius: ${(p) => (p.$sq ? 2 : 7)}px;
  background: ${(p) => (p.$sq ? "#f23b34" : "#ea5357")};
  color: #fff;
  font-size: ${(p) => (p.$sq ? 9 : 9.5)}px;
  line-height: ${(p) => (p.$sq ? 11 : 13)}px;
  text-align: center;
`;

const Tray = styled.div`
  margin-left: auto;
  width: 271px;
  display: flex;
  align-items: center;
  color: #eee;
`;

const TrayItem = styled.div<{ $w: number; $ml?: number }>`
  width: ${(p) => p.$w}px;
  margin-left: ${(p) => p.$ml ?? 0}px;
  flex: none;
  display: flex;
  justify-content: center;
  font-size: 12px;
  letter-spacing: -0.2px;
`;

const Clock = styled.div`
  width: 62px;
  flex: none;
  margin-left: 6px;
  text-align: center;
  font-size: 11.5px;
  line-height: 18px;
  letter-spacing: -0.45px;
  white-space: nowrap;
`;

const ShowDesktop = styled.div`
  width: 5px;
  height: 40px;
  margin-left: auto;
  border-left: 1px solid #6d6e70;
`;

const Bottom = () => (
  <Taskbar>
    <StartArea>
      <StartIcon $mr={29}>
        <svg width="16" height="16" viewBox="0 0 16 16" fill="#fff"><path d="M0 2.300L6.500 1.400v6.200H0zM7.300 1.300L16 0v7.600H7.300zM0 8.400h6.500v6.200L0 13.700zM7.300 8.400H16V16L7.300 14.700z" /></svg>
      </StartIcon>
      <StartIcon $mr={29}>
        <svg width="22" height="22" viewBox="0 0 22 22" fill="none" stroke="#fff" strokeWidth="2.200"><circle cx="13.500" cy="8.500" r="7.300" /><path d="M8.300 13.700L.8 21.200" /></svg>
      </StartIcon>
      <StartIcon $mr={20}>
        <svg width="17" height="16" viewBox="0 0 17 16" fill="none" stroke="#fff" strokeWidth="1.100"><path d="M.5 0v2.500h10V0M.5 16v-2.500h10V16M.5 5h10v6H.5zM14.500 0v4M14.500 8v8" /><rect x="13.500" y="4.500" width="2.500" height="2.500" fill="#fff" /></svg>
      </StartIcon>
      Ссылки
    </StartArea>
    <Apps>
      <AppButton $w={40} $mr={5}><Disc $bg="#5865f2"><FaDiscord size={16} /></Disc><Badge>9+</Badge></AppButton>
      <AppButton $w={48} $mr={5} $on>
        <svg width="24" height="24" viewBox="0 0 24 24">
          <defs>
            <linearGradient id="e1" x1="0" y1="0" x2="1" y2="0"><stop offset="0" stopColor="#1f9fe0" /><stop offset=".5" stopColor="#2cc3d6" /><stop offset="1" stopColor="#5fe05a" /></linearGradient>
            <linearGradient id="e2" x1="0" y1="0" x2="0" y2="1"><stop offset="0" stopColor="#1d8fdb" /><stop offset="1" stopColor="#0a4fa5" /></linearGradient>
          </defs>
          <circle cx="12" cy="12" r="12" fill="url(#e2)" />
          <path d="M0 11Q1 0 12 0T24 10.500Q23.500 16 18 16.200 14 16 14.200 14.500 16 12.500 14.500 10 12.500 7 8.500 7 3 7 0 11z" fill="url(#e1)" />
          <path d="M14.200 14.500Q14 16.500 18 16.200 21 16 23 14.500 21.500 19 18 20.500 12 21 10 17 8.500 12.500 12 10 15 11 14.200 14.500z" fill="#5f4d58" />
          <path d="M9 8.500Q5.500 13 8.500 18.500 11.500 23 18.500 21 14 24.500 9 23.500 0 20 2 13 4 9 9 8.500z" fill="#1470c2" />
        </svg>
      </AppButton>
      <AppButton $w={40} $mr={9}><Disc $bg="#2a9fdc"><FaTelegramPlane size={14} /></Disc><Badge $sq>.87</Badge></AppButton>
      <AppButton $w={40} $mr={0}>
        <svg width="22" height="18" viewBox="0 0 22 18">
          <path d="M0 0h9l1 2H0z" fill="#e19a0b" /><path d="M0 2.500L10 2l1-1h11v17H0z" fill="#fcd462" /><path d="M4 18v-6q0-1.500 1.500-1.500h11q1.500 0 1.500 1.500v6h-3.500v-3.500h-7V18z" fill="#3b93d8" />
        </svg>
      </AppButton>
    </Apps>
    <Tray>
      <TrayItem $w={24}>
        <svg width="24" height="16" viewBox="0 0 24 16">
          <defs><linearGradient id="cl" x1="0" y1="0" x2="0" y2="1"><stop offset="0" stopColor="#b4ccfb" /><stop offset="1" stopColor="#7ca3ea" /></linearGradient></defs>
          <path d="M5 16Q0 15.500 0 11.500 .5 8 5 7.300 6 .5 12 .2q5 .3 6.200 5Q24 6 24 10.500 23.500 15.500 19 16z" fill="url(#cl)" />
          <path d="M7 12Q9 7.500 13 8.500" stroke="#d6e3ff" strokeWidth="1.500" fill="none" opacity=".6" />
        </svg>
      </TrayItem>
      <TrayItem $w={32} $ml={16}><svg width="12" height="7" viewBox="0 0 12 7" fill="none" stroke="#fff" strokeWidth="1.200"><path d="M.5 6.500L6 1l5.500 5.500" /></svg></TrayItem>
      <TrayItem $w={16}>
        <svg width="16" height="13" viewBox="0 0 16 13" fill="none" stroke="#fff" strokeWidth="1.100"><path d="M5.500 1h10v7.500H2.500V5M9 8.500V12M5.500 12h7" /><rect x=".5" y=".5" width="4" height="4" /></svg>
      </TrayItem>
      <TrayItem $w={32}>
        <svg width="17" height="14" viewBox="0 0 17 14" fill="none" stroke="#fff" strokeWidth="1.100"><path d="M.6 4.500h2.200L6.200 1.500v11L2.800 9.500H.6zM8.500 4.800q1.500 2.200 0 4.400" /><path d="M10.800 3q2.800 4 0 8" opacity=".8" /><path d="M13.200 1.300q4 5.700 0 11.400" opacity=".4" /></svg>
      </TrayItem>
      <TrayItem $w={28}>РУС</TrayItem>
      <Clock>10:06<br />27.10.2023</Clock>
      <TrayItem $w={16} $ml={14}>
        <svg width="16" height="16" viewBox="0 0 16 16" fill="none" stroke="#fff" strokeWidth="1.200"><path d="M.6.6h14.800v11.600h-5L8 15l-2.400-2.800h-5z" /></svg>
      </TrayItem>
      <ShowDesktop />
    </Tray>
  </Taskbar>
);

export default function App() {
  return (
    <>
      <Global />
      <Screen>
        <Chrome />
        <SiteHeader>
          <Brand>СЭО</Brand>
          <NavLink $w={78}>В начало</NavLink>
          <NavLink $w={131}>Личный кабинет</NavLink>
          <NavLink $w={90}>Мои курсы</NavLink>
          <HeaderTools>
            <FaBell size={15} />
            <FaComment size={16} />
            <Avatar>АЕ</Avatar>
            <svg width="8" height="6" viewBox="0 0 8 6" fill="none" stroke="#1d2125" strokeWidth="1.400"><path d="M.7.8L4 4.600 7.300.8" /></svg>
          </HeaderTools>
        </SiteHeader>
        <Body>
          <Sidebar>
            <SidebarTop>
              <svg width="10" height="12" viewBox="0 0 10 12" fill="none" stroke="#1d2125" strokeWidth="2"><path d="M.8 1.500l8.400 9M9.200 1.500l-8.400 9" /></svg>
            </SidebarTop>
            <SidebarScroll>
              <IndexList>
                {rows.map((r, i) => (
                  <IndexRow key={i} $kind={r.k}>
                    <Caret>
                      {r.k === "head" && (
                        <svg width="12" height="7" viewBox="0 0 12 7" fill="none" stroke="#495057" strokeWidth="1.600"><path d="M.8.8L6 5.600 11.200.8" /></svg>
                      )}
                    </Caret>
                    <RowText $w={r.k === "lock" ? 170 : undefined}>{r.t}</RowText>
                    {r.k === "lock" && <FaLock size={12} color="#6a737b" />}
                  </IndexRow>
                ))}
              </IndexList>
              <SideThumb />
            </SidebarScroll>
          </Sidebar>
          <Main>
            <Card $bg="#f3f0ff" $h={136} $mb={38}>
              <Title>Теорема</Title>
              <Para $mt={30} $indent>
                Для того, чтобы функция <M bold t="f ~ ( x )" /> была непрерывна в точке <M bold t="x _0" /> необходимо и достаточно, чтобы она была непрерывна слева и справа в точке <M bold t="x _0" />.
              </Para>
            </Card>
            <Card $bg="#e7f7ff" $h={221} $mb={38}>
              <Title>Определение</Title>
              <Para $mt={19}>
                <Em>Приращением</Em> <M t="D x" /> <Em>аргумента х в точке</Em> <M t="x _0" /> называется разность <M bold t="x - x _0" /> , то есть
              </Para>
              <Para $mt={14} $center><M bold t="D x = x - x _0 ." /></Para>
              <Para $mt={15}>
                Тогда любое значение аргумента можно выразить через <M bold t="x _0" /> и приращение <M bold t="D x" />.
              </Para>
              <Para $mt={14} $center><M bold t="x = x _0 + D x ." /></Para>
            </Card>
            <Card $bg="#f0f0f0" $h={333} $mb={38}>
              <Title>Замечание</Title>
              <Para $mt={30} $indent>
                Приращение аргумента <M bold t="x" /> может быть как положительным так и отрицательным:
              </Para>
              <Figure $mt={8}><NumberLines /></Figure>
            </Card>
            <Card $bg="#e7f7ff" $h={520} $mb={0}>
              <Title>Определение</Title>
              <Para $mt={19}>
                <Em>Приращением функции</Em> <M t="f ~ ( x )" /> <Em>в точке</Em> <M t="x _0" />, соответствующим приращению аргумента <M bold t="D x" />, называется разность между двумя ее значениями , то есть
              </Para>
              <Para $mt={15} $center><M bold t="D y = ~~ f ~ ( x ) - f ~ ( x _0 ) = f ~ ( x _0 + D x ) - f ~ ( x _0 ) ." /></Para>
              <Figure $mt={9}><Graph /></Figure>
              <Para $mt={8}>Так как</Para>
              <Para $mt={14} $center><M bold t="x > x _0 <> x - x _0 > 0 ~~ <> D x > 0 ," /></Para>
            </Card>
          </Main>
          <PageScroll><PageThumb /></PageScroll>
          <DrawerToggle>
            <svg width="9" height="15" viewBox="0 0 9 15" fill="none" stroke="#1d2125" strokeWidth="1.900"><path d="M7.800 1L1.500 7.500 7.800 14" /></svg>
          </DrawerToggle>
        </Body>
        <Bottom />
      </Screen>
    </>
  );
}
